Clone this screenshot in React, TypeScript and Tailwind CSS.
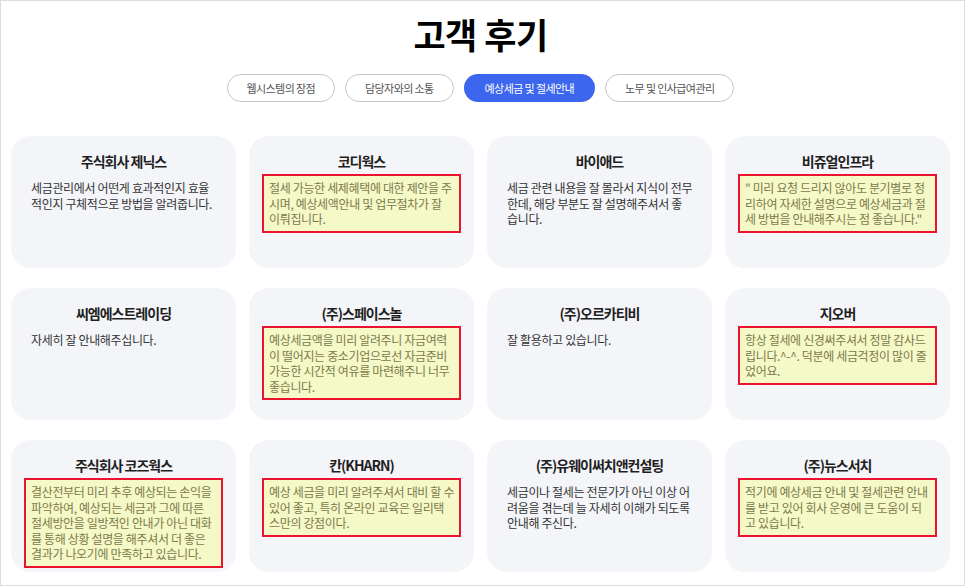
const tabs = ['웹시스템의 장점', '담당자와의 소통', '예상세금 및 절세안내', '노무 및 인사급여관리'];
const activeTab = 2;

type Review = { name: string; lines: string[]; marked?: boolean };

const reviews: Review[] = [
  { name: '주식회사 제닉스', lines: ['세금관리에서 어떤게 효과적인지 효율', '적인지 구체적으로 방법을 알려줍니다.'] },
  { name: '코디웍스', marked: true, lines: ['절세 가능한 세제혜택에 대한 제안을 주', '시며, 예상세액안내 및 업무절차가 잘', '이뤄집니다.'] },
  { name: '바이애드', lines: ['세금 관련 내용을 잘 몰라서 지식이 전무', '한데, 해당 부분도 잘 설명해주셔서 좋', '습니다.'] },
  { name: '비쥬얼인프라', marked: true, lines: ['" 미리 요청 드리지 않아도 분기별로 정', '리하여 자세한 설명으로 예상세금과 절', '세 방법을 안내해주시는 점 좋습니다."'] },
  { name: '씨엠에스트레이딩', lines: ['자세히 잘 안내해주십니다.'] },
  { name: '(주)스페이스놀', marked: true, lines: ['예상세금액을 미리 알려주니 자금여력', '이 떨어지는 중소기업으로선 자금준비', '가능한 시간적 여유를 마련해주니 너무', '좋습니다.'] },
  { name: '(주)오르카티비', lines: ['잘 활용하고 있습니다.'] },
  { name: '지오버', marked: true, lines: ['항상 절세에 신경써주셔서 정말 감사드', '립니다.^-^. 덕분에 세금걱정이 많이 줄', '었어요.'] },
  { name: '주식회사 코즈웍스', marked: true, lines: ['결산전부터 미리 추후 예상되는 손익을', '파악하여, 예상되는 세금과 그에 따른', '절세방안을 일방적인 안내가 아닌 대화', '를 통해 상황 설명을 해주셔서 더 좋은', '결과가 나오기에 만족하고 있습니다.'] },
  { name: '칸(KHARN)', marked: true, lines: ['예상 세금을 미리 알려주셔서 대비 할 수', '있어 좋고, 특히 온라인 교육은 일리택', '스만의 강점이다.'] },
  { name: '(주)유웨이써치앤컨설팅', lines: ['세금이나 절세는 전문가가 아닌 이상 어', '려움을 겪는데 늘 자세히 이해가 되도록', '안내해 주신다.'] },
  { name: '(주)뉴스서치', marked: true, lines: ['적기에 예상세금 안내 및 절세관련 안내', '를 받고 있어 회사 운영에 큰 도움이 되', '고 있습니다.'] },
];

function ReviewCard({ review }: { review: Review }) {
  return (
    <div className="h-[132px] rounded-[20px] bg-[#f4f5f9] px-[13px] pt-[15px]">
      <h3 className="text-center text-[14px] font-bold leading-[20px] tracking-[-1px] text-[#1f1f1f]">{review.name}</h3>
      <div
        className={
          review.marked
            ? 'mt-[3px] border-2 border-[#ea1430] bg-[#f5f8c7] px-[5px] pt-[4px] pb-[4px] text-[#7c7a4b]'
            : 'mt-[3px] border-2 border-transparent px-[5px] pt-[4px] pb-[4px] text-[#333]'
        }
      >
        {review.lines.map((line) => (
          <p key={line} className="whitespace-nowrap text-[12px] leading-[15.5px] tracking-[-0.35px]">
            {line}
          </p>
        ))}
      </div>
    </div>
  );
}

export default function App() {
  return (
    <div className="h-[587px] w-[966px] bg-white font-['Noto_Sans_CJK_KR',sans-serif]">
      <div className="h-[586px] w-[965px] border border-[#dcdcdc]">
        <h1 className="pt-[11px] pr-[4px] text-center text-[35px] font-bold leading-[44px] tracking-[-0.5px] text-black">고객 후기</h1>
        <div className="mt-[18px] flex justify-center gap-[10px] pr-[4px]">
          {tabs.map((tab, i) => (
            <button
              key={tab}
              className={
                i === activeTab
                  ? 'h-[28px] rounded-full bg-[#3d66ef] px-[21px] text-[11px] tracking-[-0.6px] text-white'
                  : 'h-[28px] rounded-full border border-[#c6c6c6] bg-white px-[19px] text-[11px] tracking-[-0.6px] text-[#555]'
              }
            >
              {tab}
            </button>
          ))}
        </div>
        <div className="mt-[34px] grid grid-cols-[repeat(4,225px)] gap-x-[13px] gap-y-[20px] pl-[10px]">
          {reviews.map((review) => (
            <ReviewCard key={review.name} review={review} />
          ))}
        </div>
      </div>
    </div>
  );
}
